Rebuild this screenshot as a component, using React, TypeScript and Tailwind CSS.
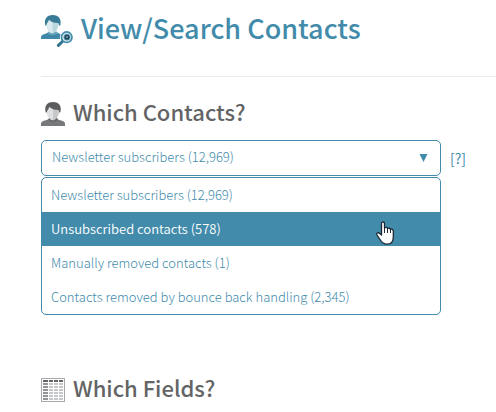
import { useState } from 'react'

const lists = [
    { id: 'subscribers', name: 'Newsletter subscribers (12,969)' },
    { id: 'unsubscribed', name: 'Unsubscribed contacts (578)' },
    { id: 'removed', name: 'Manually removed contacts (1)' },
    { id: 'bounced', name: 'Contacts removed by bounce back handling (2,345)' },
]

function ContactSearchIcon() {
    return (
        <svg className="size-8 shrink-0" viewBox="0 0 32 32" aria-hidden="true">
            <path d="M0 24v-1.500c0-1.700 1-2.500 3-3.200L8 17.300h7l5 2c1.800.7 2.800 1.500 2.800 3.200V24z" fill="#3f88a8" />
            <path d="M7.500 16.500h8l1.500 1.500c-1.500 2.500-9 2.500-10.500 0z" fill="#6ba6ba" />
            <path d="M5.300 8c0-3.500 2-5.500 6-5.500s6.200 2 6.200 5.500c0 5-2.700 10.200-6.200 10.200S5.300 13 5.300 8z" fill="#b9d9df" />
            <path d="M5.300 8c0-3.500 2-5.500 6.200-5.500v15.700C8 18.200 5.300 13 5.300 8z" fill="#dcebef" />
            <path d="M4.300 10.500C2.800 4.500 5.500 0 11.700 0c6.300 0 9.100 4.300 7.600 10.500h-1.200L17.300 8c-3.500.2-7-1-9.300-3.300C7.500 7 5.500 8 5.200 10.500z" fill="#387c97" />
            <path d="M22.500 25.500l-5.700 5" stroke="#fff" strokeWidth="5.500" />
            <circle cx="25.700" cy="22.200" r="6.900" fill="#fff" />
            <path d="M21.700 26.200l-4.300 4.200" stroke="#34728d" strokeWidth="3" strokeLinecap="round" />
            <circle cx="25.700" cy="22.200" r="5.300" fill="#c4e0e6" stroke="#3f88a8" strokeWidth="1.600" />
            <circle cx="26" cy="22.200" r="2.900" fill="#1f455a" stroke="#4b8ca8" strokeWidth=".8" />
            <circle cx="26" cy="22" r=".7" fill="#fff" />
        </svg>
    )
}

function ContactIcon() {
    return (
        <svg className="size-6 shrink-0" viewBox="0 0 24 24" aria-hidden="true">
            <path d="M0 24v-2c0-1.700 1-2.500 3-3.200l5.500-1.800h7l5.500 1.800c2 .7 3 1.500 3 3.200v2z" fill="#77787b" />
            <path d="M7 17.500c1.500 3.300 8.500 3.300 10 0L15.500 15H9z" fill="#68696b" />
            <path d="M5.800 8c0-3.500 2-5.500 6.200-5.500s6.200 2 6.200 5.500c0 5-2.700 10.200-6.200 10.200S5.800 13 5.800 8z" fill="#c7c8ca" />
            <path d="M5.800 8c0-3.500 2-5.500 6.200-5.500v15.700C8.500 18.200 5.800 13 5.800 8z" fill="#e0e1e3" />
            <path d="M4.700 10.500C3.200 4.500 5.500 0 12 0c6.600 0 8.900 4.500 7.300 10.500h-1L17.700 8c-3.500.2-7-1-9.300-3.300C8 7 6 8 5.700 10.500z" fill="#5b5c5e" />
        </svg>
    )
}

function FieldsIcon() {
    const rows = [5, 8, 11, 14, 17, 20]
    return (
        <svg className="size-6 shrink-0" viewBox="0 0 24 24" shapeRendering="crispEdges" aria-hidden="true">
            <path d="M0 0h24v24H0zM1 1v22h22V1z" fill="#a7a9ac" fillRule="evenodd" />
            {[2, 8, 13, 18].map((x) => (
                <rect key={x} x={x} y="2" width={x === 2 ? 5 : 4} height="2" fill="#636466" />
            ))}
            {rows.map((y) => (
                <g key={y}>
                    <rect x="2" y={y} width="5" height="2" fill="#929497" />
                    <rect x="8" y={y} width="4" height="2" fill="#c7c8ca" />
                    <rect x="13" y={y} width="4" height="2" fill="#c7c8ca" />
                    <rect x="18" y={y} width="4" height="2" fill="#c7c8ca" />
                </g>
            ))}
        </svg>
    )
}

function HandPointer() {
    return (
        <svg className="pointer-events-none absolute top-[9px] right-[45px] h-6 w-5" viewBox="0 0 20 24" aria-hidden="true">
            <path
                d="M6.500 14V2.500C6.500.5 9.500.5 9.500 2.500V7C10.500 6 12.500 6.300 12.500 7.600C13.500 6.800 15.500 7.200 15.500 8.400C16.800 7.800 18.300 8.500 18.300 10V16C18.300 20.500 16.500 23.200 12 23.200C8.500 23.200 6.800 21.500 5 18.500L2 14C1 12.300 3.200 11 4.500 12.300z"
                fill="#fff"
                stroke="#1d2733"
                strokeWidth="1.300"
                strokeLinejoin="round"
            />
            <path d="M9.500 7v5M12.500 8v4M15.500 8.500v3.500" stroke="#1d2733" strokeWidth="1" />
        </svg>
    )
}

export default function App() {
    const [selected, setSelected] = useState('subscribers')
    const [active, setActive] = useState('unsubscribed')

    return (
        <main className="min-h-screen bg-white pl-[41px] font-['Noto_Sans_CJK_SC',sans-serif] text-[#428bab]">
            <header className="flex h-[77px] items-start gap-2 border-b border-[#ebebeb] pt-[15px]">
                <ContactSearchIcon />
                <h1 className="text-[27px] leading-[26px] font-medium">View/Search Contacts</h1>
            </header>

            <section className="pt-[25px]">
                <h2 className="text-[#636466]">
                    <label htmlFor="contacts" className="flex items-start gap-2 text-[22px] leading-[18px] font-medium">
                        <ContactIcon />
                        Which Contacts?
                    </label>
                </h2>
                <div className="mt-[14px] flex items-center gap-[9px] pr-6">
                    <div className="relative w-full max-w-[400px]">
                        <select
                            id="contacts"
                            value={selected}
                            onChange={(e) => setSelected(e.target.value)}
                            className="block h-9 w-full appearance-none rounded-[5px] border border-[#428bab] bg-white px-[10px] pb-[2px] text-[13px] font-light outline-none"
                        >
                            {lists.map((list) => (
                                <option key={list.id} value={list.id}>{list.name}</option>
                            ))}
                        </select>
                        <svg className="pointer-events-none absolute top-[14px] right-[13px] h-2 w-[9px]" viewBox="0 0 9 8" aria-hidden="true">
                            <path d="M.5 0h8l-4 8z" fill="#428bab" />
                        </svg>
                    </div>
                    <a href="#help" className="text-[14px] leading-5">[?]</a>
                </div>
                <ul role="listbox" aria-label="Which Contacts?" className="mt-px mr-6 max-w-[400px] rounded-[5px] border border-[#428bab] text-[13px] font-light">
                    {lists.map((list) => (
                        <li
                            key={list.id}
                            role="option"
                            aria-selected={list.id === selected}
                            onMouseEnter={() => setActive(list.id)}
                            onClick={() => setSelected(list.id)}
                            className={list.id === active
                                ? 'relative flex h-[34px] cursor-pointer items-center bg-[#428bab] px-[9px] font-[350] text-white'
                                : 'relative flex h-[34px] cursor-pointer items-center px-[9px]'}
                        >
                            {list.name}
                            {list.id === active && <HandPointer />}
                        </li>
                    ))}
                </ul>
            </section>

            <section className="pt-[63px]">
                <h2 className="flex items-start gap-2 text-[22px] leading-[18px] font-medium text-[#636466]">
                    <FieldsIcon />
                    Which Fields?
                </h2>
            </section>
        </main>
    )
}
